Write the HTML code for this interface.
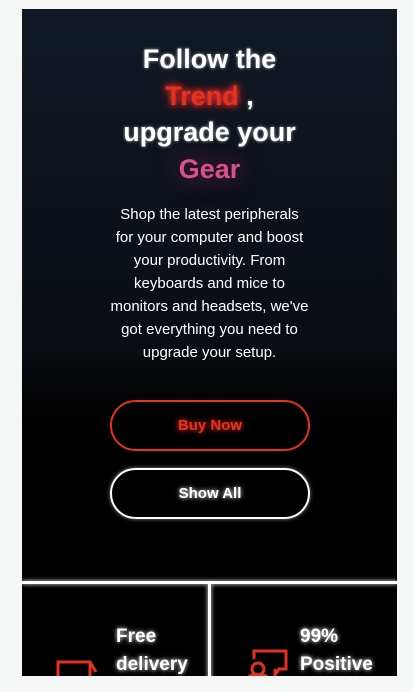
<!DOCTYPE html>
<html><head><style>
body{margin:0;background:#f5f6f6;width:413px;height:692px;overflow:hidden;font-family:"Liberation Sans",sans-serif}
.card{position:absolute;left:22px;top:9px;width:375px;height:667px;background:linear-gradient(#111925 0%,#0a0d13 50%,#000 62%,#000 100%);overflow:hidden}
h1{position:absolute;left:0;width:375px;top:32px;margin:0;text-align:center;color:#fff;font-size:27px;line-height:36.5px;font-weight:bold;text-shadow:0 0 3px rgba(255,255,255,.6)}
.tr{color:#e4321e;text-shadow:0 0 6px #f33,0 0 10px #e22}
.gr{color:#d9508a;text-shadow:0 0 25px rgba(200,60,120,.6)}
p{position:absolute;left:40px;width:295px;top:194px;margin:0;text-align:center;color:#fff;font-size:15px;line-height:23px;white-space:nowrap}
.b{position:absolute;left:88px;width:196px;height:47px;border-radius:26px;text-align:center;line-height:47px;font-weight:bold;font-size:15px}
.b1{top:391px;border:2px solid #e4321e;color:#e4321e;text-shadow:0 0 6px #f33}
.b2{top:459px;border:2px solid #fff;color:#fff;text-shadow:0 0 5px #fff;box-shadow:0 0 4px rgba(255,255,255,.5)}
.hl{position:absolute;left:0;top:572px;width:375px;height:3px;background:#fff;box-shadow:0 0 4px #fff}
.vl{position:absolute;left:186px;top:575px;width:3px;height:100px;background:#fff;box-shadow:0 0 4px #fff}
.t{position:absolute;color:#fff;font-size:19px;line-height:28px;font-weight:bold;text-shadow:0 0 5px #fff}
</style></head><body>
<div class="card">
<h1>Follow the<br><span class="tr">Trend</span> ,<br>upgrade your<br><span class="gr">Gear</span></h1>
<p>Shop the latest peripherals<br>for your computer and boost<br>your productivity. From<br>keyboards and mice to<br>monitors and headsets, we've<br>got everything you need to<br>upgrade your setup.</p>
<div class="b b1">Buy Now</div>
<div class="b b2">Show All</div>
<div class="hl"></div><div class="vl"></div>
<div class="t" style="left:94px;top:614px">Free<br>delivery</div>
<div class="t" style="left:278px;top:614px">99%<br>Positive</div>
<svg style="position:absolute;left:34px;top:650px" width="50" height="20" fill="none" stroke="#e4321e" stroke-width="3"><path d="M2 20V3h32v17M34 3l6 10"/></svg>
<svg style="position:absolute;left:222px;top:640px" width="50" height="30" fill="none" stroke="#e4321e" stroke-width="3"><path d="M10 10V2h32v18h-7l-4 6v-6"/><circle cx="14" cy="20" r="6"/><path d="M3 30c2-6 20-6 22 0"/></svg>
</div>
</body></html>
